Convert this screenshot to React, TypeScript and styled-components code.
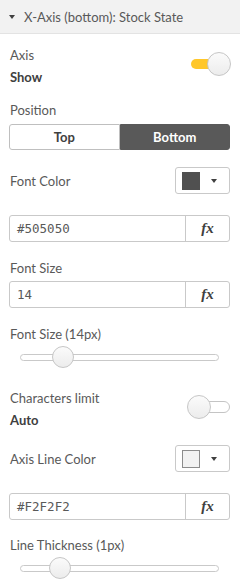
import React from 'react'
import styled, { createGlobalStyle } from 'styled-components'

const GlobalStyle = createGlobalStyle`
  body {
    margin: 0;
    background: #ffffff;
    font-family: Lato, "Open Sans", sans-serif;
    color: #595959;
  }
`

const Panel = styled.div`
  width: 240px;
  height: 579px;
  overflow: hidden;
  background: #ffffff;
`

const Header = styled.div`
  height: 33px;
  display: flex;
  align-items: center;
  gap: 9px;
  padding-left: 9px;
  background: #f2f2f2;
  border-bottom: 1px solid #e3e3e3;
  font-size: 13px;
  color: #595959;
`

const Caret = styled.span<{ $size?: number }>`
  width: 0;
  height: 0;
  border-left: ${({ $size = 3.5 }) => $size}px solid transparent;
  border-right: ${({ $size = 3.5 }) => $size}px solid transparent;
  border-top: 4px solid #404040;
`

const Body = styled.div`
  display: flex;
  flex-direction: column;
  padding: 10px 10px 0 9px;
`

const Label = styled.div<{ $mt?: number }>`
  margin-top: ${({ $mt = 0 }) => $mt}px;
  font-size: 13px;
  line-height: 22px;
  padding-left: 1px;
  color: #595959;
  white-space: nowrap;
`

const Value = styled(Label)`
  font-weight: 700;
  color: #404040;
`

const ToggleRow = styled.div<{ $mt?: number }>`
  margin-top: ${({ $mt = 0 }) => $mt}px;
  display: flex;
  justify-content: space-between;
  align-items: flex-start;
`

const Toggle = styled.div`
  position: relative;
  width: 44px;
  height: 24px;
  margin-top: 8px;
  margin-right: -1px;
`

const Track = styled.div<{ $on: boolean }>`
  position: absolute;
  left: 4px;
  right: 1px;
  top: ${({ $on }) => ($on ? 7 : 6)}px;
  height: ${({ $on }) => ($on ? 10 : 12)}px;
  border-radius: 6px;
  box-sizing: border-box;
  background: ${({ $on }) => ($on ? '#ffc72a' : '#ffffff')};
  border: ${({ $on }) => ($on ? 'none' : '1px solid #c4c4c4')};
`

const Knob = styled.div<{ $on: boolean }>`
  position: absolute;
  top: 0;
  ${({ $on }) => ($on ? 'right: 0;' : 'left: 0;')}
  width: 24px;
  height: 24px;
  box-sizing: border-box;
  border-radius: 50%;
  border: 1px solid #c6c6c6;
  background: linear-gradient(#fbfbfb, #ececec);
`

const Segmented = styled.div`
  margin-top: 3px;
  display: grid;
  grid-template-columns: 1fr 1fr;
  height: 26px;
`

const Segment = styled.div<{ $active: boolean }>`
  display: flex;
  align-items: center;
  justify-content: center;
  font-size: 13px;
  font-weight: 700;
  box-sizing: border-box;
  color: ${({ $active }) => ($active ? '#ffffff' : '#404040')};
  background: ${({ $active }) => ($active ? '#595959' : '#ffffff')};
  border: 1px solid ${({ $active }) => ($active ? '#595959' : '#bfbfbf')};
  border-radius: ${({ $active }) => ($active ? '0 3px 3px 0' : '3px 0 0 3px')};
`

const ColorRow = styled.div<{ $mt?: number }>`
  margin-top: ${({ $mt = 0 }) => $mt}px;
  display: flex;
  justify-content: space-between;
  align-items: center;
`

const ColorButton = styled.div`
  width: 55px;
  height: 27px;
  box-sizing: border-box;
  border: 1px solid #c9c9c9;
  border-radius: 3px;
  display: flex;
  align-items: center;
  padding-left: 6px;
  gap: 11px;
`

const Swatch = styled.div<{ $color: string; $edge: string }>`
  width: 18px;
  height: 18px;
  box-sizing: border-box;
  background: ${({ $color }) => $color};
  border: 1px solid ${({ $edge }) => $edge};
`

const Field = styled.div<{ $mt?: number }>`
  margin-top: ${({ $mt = 0 }) => $mt}px;
  height: 27px;
  box-sizing: border-box;
  border: 1px solid #c9c9c9;
  border-radius: 3px;
  display: flex;
`

const FieldText = styled.div`
  flex: 1;
  display: flex;
  align-items: center;
  padding-left: 7px;
  font-family: "DejaVu Sans Mono", "Liberation Mono", monospace;
  font-size: 12.5px;
  color: #595959;
`

const FxButton = styled.div`
  width: 43px;
  border-left: 1px solid #c9c9c9;
  display: flex;
  align-items: center;
  justify-content: center;
  font-family: "Liberation Serif", serif;
  font-style: italic;
  font-weight: 700;
  font-size: 15px;
  color: #404040;
`

const Slider = styled.div<{ $mt?: number }>`
  margin: ${({ $mt = 0 }) => $mt}px 11px 0 11px;
  position: relative;
  height: 22px;
  display: flex;
  align-items: center;
`

const SliderTrack = styled.div`
  width: 100%;
  height: 7px;
  box-sizing: border-box;
  border: 1px solid #c9c9c9;
  border-radius: 4px;
  background: #ffffff;
`

const SliderKnob = styled.div`
  position: absolute;
  top: 0;
  width: 22px;
  height: 22px;
  margin-left: -11px;
  box-sizing: border-box;
  border-radius: 50%;
  border: 1px solid #c6c6c6;
  background: linear-gradient(#fbfbfb, #ececec);
`

const RangeSlider = ({ pos, mt }: { pos: number; mt?: number }) => (
  <Slider $mt={mt}>
    <SliderTrack />
    <SliderKnob style={{ left: `${pos}%` }} />
  </Slider>
)

const Switch = ({ on }: { on: boolean }) => (
  <Toggle>
    <Track $on={on} />
    <Knob $on={on} />
  </Toggle>
)

const ColorPicker = ({ color, edge }: { color: string; edge: string }) => (
  <ColorButton>
    <Swatch $color={color} $edge={edge} />
    <Caret />
  </ColorButton>
)

const ExprField = ({ value, mt }: { value: string; mt?: number }) => (
  <Field $mt={mt}>
    <FieldText>{value}</FieldText>
    <FxButton>fx</FxButton>
  </Field>
)

const App = () => (
  <Panel>
    <GlobalStyle />
    <Header>
      <Caret />
      <span>X-Axis (bottom): Stock State</span>
    </Header>
    <Body>
      <ToggleRow>
        <div>
          <Label>Axis</Label>
          <Value>Show</Value>
        </div>
        <Switch on />
      </ToggleRow>

      <Label $mt={11}>Position</Label>
      <Segmented>
        <Segment $active={false}>Top</Segment>
        <Segment $active>Bottom</Segment>
      </Segmented>

      <ColorRow $mt={17}>
        <Label>Font Color</Label>
        <ColorPicker color="#505050" edge="#505050" />
      </ColorRow>
      <ExprField mt={21} value="#505050" />

      <Label $mt={15}>Font Size</Label>
      <ExprField mt={2} value="14" />

      <Label $mt={15}>Font Size (14px)</Label>
      <RangeSlider mt={1} pos={21.6} />

      <ToggleRow $mt={19}>
        <div>
          <Label>Characters limit</Label>
          <Value>Auto</Value>
        </div>
        <Switch on={false} />
      </ToggleRow>

      <ColorRow $mt={14}>
        <Label>Axis Line Color</Label>
        <ColorPicker color="#f2f2f2" edge="#8c8c8c" />
      </ColorRow>
      <ExprField mt={21} value="#F2F2F2" />

      <Label $mt={14}>Line Thickness (1px)</Label>
      <RangeSlider mt={1} pos={20.1} />
    </Body>
  </Panel>
)

export default App
